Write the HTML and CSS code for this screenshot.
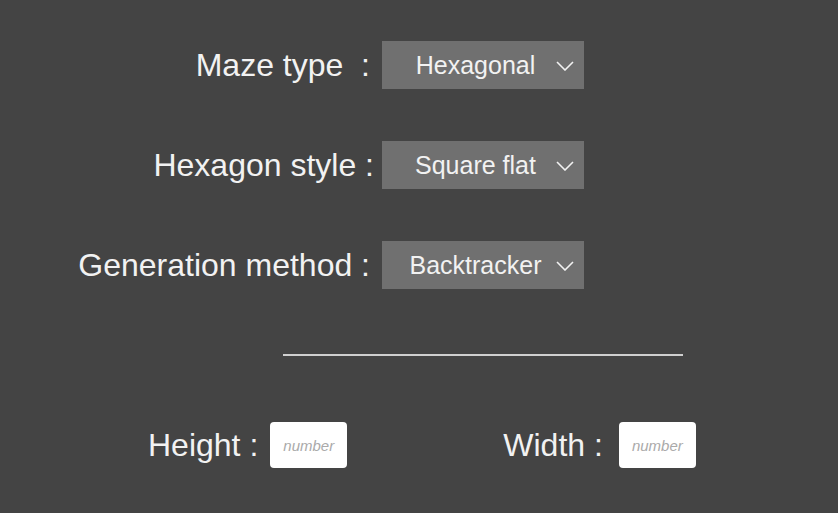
FILE: index.html
```html
<!DOCTYPE html>
<html>
<head>
<meta charset="utf-8">
<link rel="stylesheet" href="styles.css">
</head>
<body>
<div class="page">
  <div class="form">
    <div class="label">Maze type&nbsp;&nbsp;:</div>
    <div class="select"><span class="value">Hexagonal</span><svg class="chev" width="18" height="10" viewBox="0 0 18 10"><polyline points="1,1 9,9 17,1" fill="none" stroke="#f2f2f2" stroke-width="1.6"/></svg></div>
    <div class="label label-shift">Hexagon style :</div>
    <div class="select"><span class="value">Square flat</span><svg class="chev" width="18" height="10" viewBox="0 0 18 10"><polyline points="1,1 9,9 17,1" fill="none" stroke="#f2f2f2" stroke-width="1.6"/></svg></div>
    <div class="label">Generation method :</div>
    <div class="select"><span class="value">Backtracker</span><svg class="chev" width="18" height="10" viewBox="0 0 18 10"><polyline points="1,1 9,9 17,1" fill="none" stroke="#f2f2f2" stroke-width="1.6"/></svg></div>
  </div>
  <div class="divider"></div>
  <div class="dims">
    <div class="field">
      <span class="label">Height :</span>
      <input class="num" type="text" placeholder="number">
    </div>
    <div class="field field-wide">
      <span class="label">Width :</span>
      <input class="num" type="text" placeholder="number">
    </div>
  </div>
</div>
</body>
</html>
```
FILE: styles.css
```css
html, body {
  margin: 0;
  padding: 0;
  background: #444444;
  height: 100%;
}
body {
  font-family: "Liberation Sans", Arial, sans-serif;
  color: #f2f2f2;
  overflow: hidden;
}
.page {
  padding-top: 41px;
}
.form {
  display: grid;
  grid-template-columns: 370px 202px;
  grid-auto-rows: 48px;
  column-gap: 12px;
  row-gap: 52px;
}
.label {
  font-size: 32px;
  line-height: 48px;
  text-align: right;
  white-space: nowrap;
  color: #f2f2f2;
}
.label-shift {
  margin-right: -4px;
}
.select {
  position: relative;
  background: #707070;
  display: flex;
  align-items: center;
  justify-content: center;
  padding-right: 15px;
  box-sizing: border-box;
  font-size: 25px;
  color: #f2f2f2;
}
.chev {
  position: absolute;
  right: 10px;
  top: 20px;
}
.divider {
  margin-left: 283px;
  margin-top: 65px;
  width: 400px;
  height: 2px;
  background: #d0d0d0;
}
.dims {
  display: flex;
  align-items: center;
  margin-top: 65px;
  padding-left: 148px;
  gap: 156px;
}
.field {
  display: flex;
  align-items: center;
  gap: 12px;
}
.field-wide {
  gap: 16px;
}
.num {
  width: 77px;
  height: 46px;
  box-sizing: border-box;
  border: none;
  border-radius: 4px;
  background: #ffffff;
  text-align: center;
  font-family: "Liberation Sans", Arial, sans-serif;
  font-size: 15px;
  font-style: italic;
  padding: 0;
  outline: none;
}
.num::placeholder {
  color: #aaaaaa;
  font-style: italic;
}
```
